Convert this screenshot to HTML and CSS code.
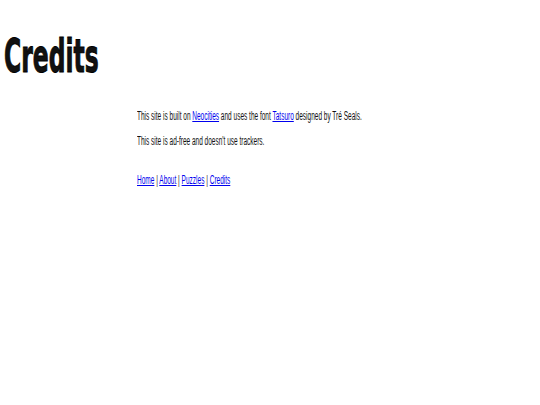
FILE: index.html
```html
<!DOCTYPE html>
<html>
<head>
<meta charset="utf-8">
<link rel="stylesheet" href="styles.css">
</head>
<body>
<h1 class="title"><span class="squeeze-h">Credits</span></h1>
<main class="content">
  <p class="line"><span class="squeeze">This site is built on <a href="#">Neocities</a> and uses the font <a href="#">Tatsuro</a> designed by Tré Seals.</span></p>
  <p class="line"><span class="squeeze">This site is ad-free and doesn't use trackers.</span></p>
  <nav class="nav line"><span class="squeeze"><a href="#">Home</a> | <a href="#">About</a> | <a href="#">Puzzles</a> | <a href="#">Credits</a></span></nav>
</main>
</body>
</html>
```
FILE: styles.css
```css
html, body {
  margin: 0;
  padding: 0;
  background: #fff;
}
body {
  font-family: "Liberation Sans", Arial, sans-serif;
  color: #111;
}
.title {
  margin: 36px 0 0 4px;
  font-family: "DejaVu Sans", sans-serif;
  font-weight: bold;
  font-size: 46px;
  line-height: 40px;
  height: 40px;
  -webkit-text-stroke: 1px #000;
}
.squeeze-h {
  display: inline-block;
  transform: scaleX(0.51);
  transform-origin: left center;
}
.content {
  margin: 34px 0 0 137px;
}
.line {
  margin: 0 0 13px 0;
  font-size: 12px;
  line-height: 12px;
  white-space: nowrap;
}
.squeeze {
  display: inline-block;
  transform: scaleX(0.542);
  transform-origin: left center;
}
.nav {
  margin-top: 27px;
}
a {
  color: #0000ee;
}
```
